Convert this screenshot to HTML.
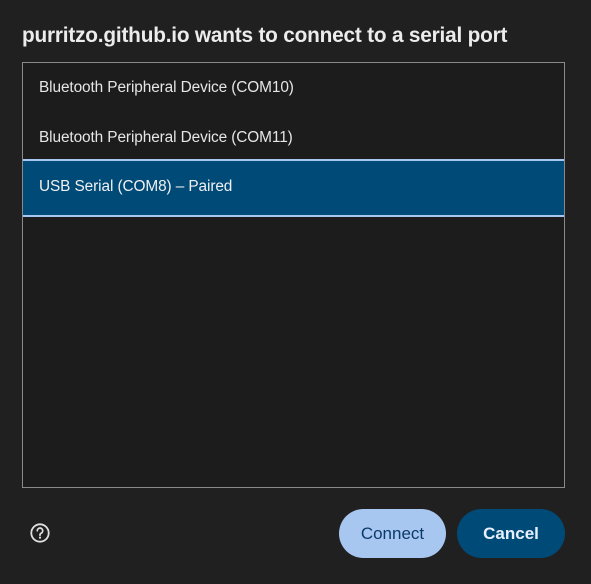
<!DOCTYPE html>
<html><head><style>
html,body{margin:0;padding:0;width:591px;height:584px;background:#202020;overflow:hidden;font-family:"Liberation Sans",sans-serif;color:#e8e8e8}
.t{position:absolute;left:22px;top:24px;font-size:20.8px;font-weight:bold;color:#ececec;letter-spacing:-0.2px;white-space:nowrap}
.box{position:absolute;left:22px;top:62px;width:541px;height:424px;border:1px solid #8a8a8a;background:#1c1c1c}
.r{position:absolute;left:16px;font-size:15.4px;white-space:nowrap;color:#e6e6e6;letter-spacing:-0.1px}
.sel{position:absolute;left:0;top:96px;width:541px;height:58px;background:#004a77;border-top:2px solid #a8c7f0;border-bottom:2px solid #a8c7f0;box-sizing:border-box}
.btn{position:absolute;top:509px;height:49px;border-radius:25px;font-size:17px;font-weight:bold;text-align:center;line-height:50px}
</style></head><body>
<div class="t">purritzo.github.io wants to connect to a serial port</div>
<div class="box">
<div class="r" style="top:16px">Bluetooth Peripheral Device (COM10)</div>
<div class="r" style="top:66px">Bluetooth Peripheral Device (COM11)</div>
<div class="sel"><div class="r" style="top:17px;left:16px;color:#f0f0f0">USB Serial (COM8) – Paired</div></div>
</div>
<svg style="position:absolute;left:29px;top:522px" width="22" height="22" viewBox="0 0 22 22"><circle cx="11" cy="11" r="8.7" fill="none" stroke="#e0e0e0" stroke-width="1.8"/><path d="M8.3 8.8a2.7 2.7 0 1 1 3.8 2.4c-.8.4-1.1.9-1.1 1.7v.4" fill="none" stroke="#e0e0e0" stroke-width="1.7" stroke-linecap="round"/><circle cx="11" cy="15.6" r="1.1" fill="#e0e0e0"/></svg>
<div class="btn" style="left:339px;width:107px;background:#a8c7f0;color:#0a3a6a;font-weight:normal">Connect</div>
<div class="btn" style="left:457px;width:108px;background:#004a77;color:#e8f0ff">Cancel</div>
</body></html>
